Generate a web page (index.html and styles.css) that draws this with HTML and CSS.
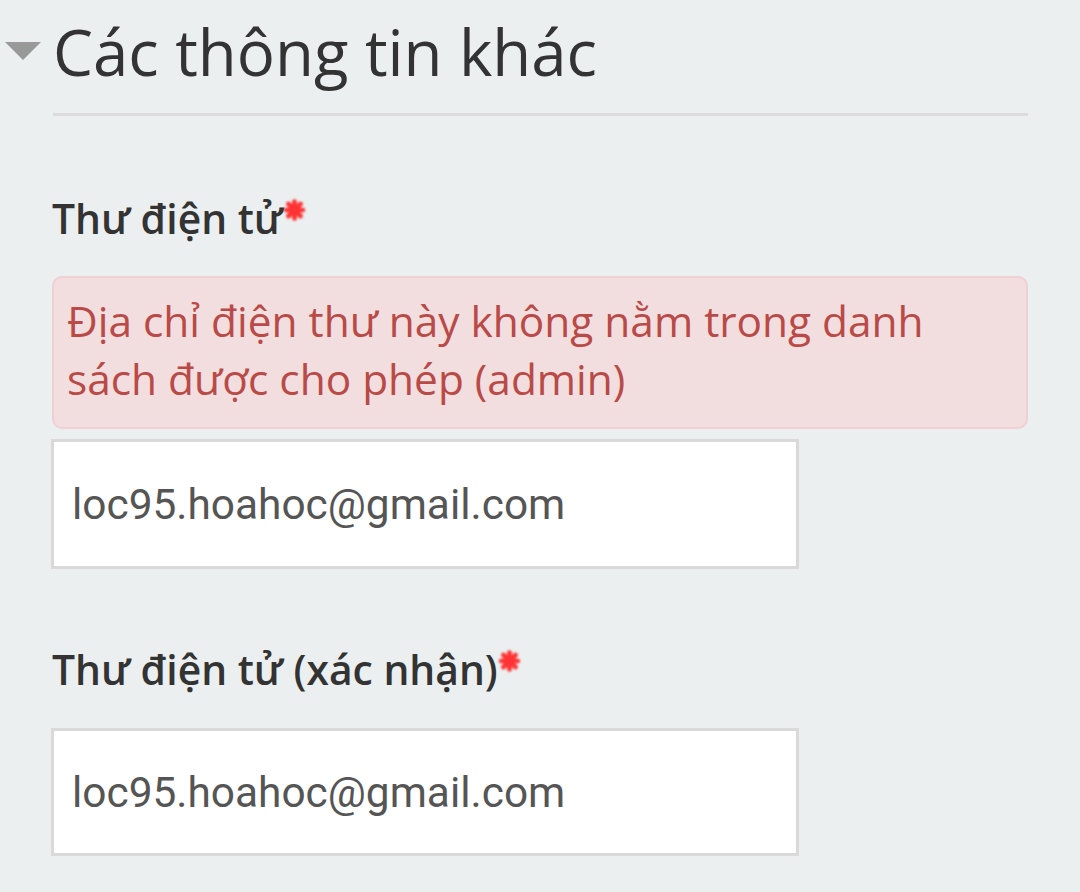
FILE: index.html
```html
<!DOCTYPE html>
<html lang="vi">
<head>
    <meta charset="UTF-8">
    <meta name="viewport" content="width=device-width, initial-scale=1.0">
    <title>Các thông tin khác</title>
    <link rel="stylesheet" href="styles.css">
</head>
<body>
    <fieldset class="section">
        <div class="section-head">
            <span class="toggle"></span>
            <h3 class="section-title">Các thông tin khác</h3>
        </div>

        <div class="field">
            <label class="field-label" for="email">Thư điện tử<svg class="req" viewBox="0 0 20 20"><path d="M10 2v16M2 10h16M4.3 4.3l11.4 11.4M15.7 4.3L4.3 15.7"/></svg></label>
            <div class="field-error">Địa chỉ điện thư này không nằm trong danh sách được cho phép (admin)</div>
            <input class="field-input" type="text" id="email" value="loc95.hoahoc@gmail.com">
        </div>

        <div class="field field-next">
            <label class="field-label" for="email2">Thư điện tử (xác nhận)<svg class="req" viewBox="0 0 20 20"><path d="M10 2v16M2 10h16M4.3 4.3l11.4 11.4M15.7 4.3L4.3 15.7"/></svg></label>
            <input class="field-input" type="text" id="email2" value="loc95.hoahoc@gmail.com">
        </div>
    </fieldset>
</body>
</html>
```

FILE: styles.css
```css
* {
    margin: 0;
    padding: 0;
    box-sizing: border-box;
}

body {
    background: #ebeff0;
    font-family: 'Open Sans', 'Noto Sans', sans-serif;
    color: #333;
}

.section {
    border: none;
    padding: 0 52px 0 52px;
}

/* Header */
.section-head {
    display: flex;
    align-items: flex-start;
    margin-left: -47px;
    padding-top: 9px;
}

.toggle {
    width: 0;
    height: 0;
    margin-top: 33px;
    border-left: 18px solid transparent;
    border-right: 18px solid transparent;
    border-top: 18px solid #999;
    flex-shrink: 0;
}

.section-title {
    flex: 1;
    margin-left: 12px;
    font-size: 63.5px;
    font-weight: 400;
    line-height: 86px;
    color: #333;
    padding-bottom: 18px;
    border-bottom: 3px solid #dcdcdc;
}

/* Fields */
.field {
    margin-top: 74px;
}

.field-next {
    margin-top: 72px;
}

.field-label {
    display: block;
    font-size: 40.8px;
    font-weight: 600;
    line-height: 56px;
    color: #333;
}

.req {
    width: 21px;
    height: 22px;
    margin-left: 1px;
    vertical-align: 13px;
    fill: none;
    stroke: #f33;
    stroke-width: 4.5;
    stroke-linecap: round;
    filter: blur(1.2px);
}

.field-error {
    margin-top: 30px;
    padding: 14px 13px 19px;
    background: #f2dede;
    border: 2px solid #efd0d4;
    border-radius: 10px;
    color: #b94a48;
    font-size: 42.4px;
    line-height: 58px;
}

.field-input {
    display: block;
    width: 748px;
    height: 130px;
    margin: 10px 0 0 -1px;
    padding: 0 18px;
    background: #fff;
    border: 3px solid #d9d9d9;
    border-radius: 0;
    font-family: Roboto, 'Liberation Sans', sans-serif;
    font-size: 42.4px;
    color: #555;
    outline: none;
}

.field-next .field-input {
    margin-top: 31px;
    height: 128px;
}
```
